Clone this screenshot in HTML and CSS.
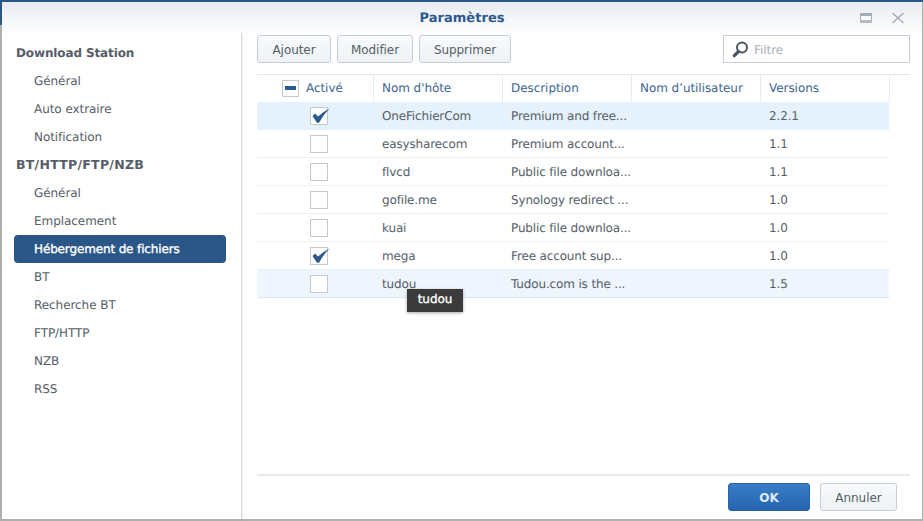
FILE: index.html
```html
<!DOCTYPE html>
<html lang="fr">
<head>
<meta charset="utf-8">
<title>Paramètres</title>
<link rel="stylesheet" href="styles.css">
</head>
<body>
<div class="window">
  <header class="titlebar">
    <div class="title">Paramètres</div>
    <div class="winbtns">
      <svg class="winicon" width="12" height="10" viewBox="0 0 12 10"><rect x="0.5" y="0.5" width="11" height="9" fill="#e4e7ea" stroke="#a3abb4"/><rect x="0" y="0" width="12" height="3" fill="#a3abb4"/><rect x="1" y="3" width="10" height="4" fill="#fbfcfd"/><rect x="0" y="7" width="12" height="3" fill="#b4bac1"/></svg>
      <svg class="winicon" width="12" height="10" viewBox="0 0 12 10"><path d="M0.5 0 L11.5 10 M11.5 0 L0.5 10" stroke="#a3abb4" stroke-width="1.4" fill="none"/></svg>
    </div>
  </header>
  <div class="body">
    <nav class="sidebar">
      <div class="nav-head">Download Station</div>
      <div class="nav-item">Général</div>
      <div class="nav-item">Auto extraire</div>
      <div class="nav-item">Notification</div>
      <div class="nav-head wide">BT/HTTP/FTP/NZB</div>
      <div class="nav-item">Général</div>
      <div class="nav-item">Emplacement</div>
      <div class="nav-item selected">Hébergement de fichiers</div>
      <div class="nav-item">BT</div>
      <div class="nav-item">Recherche BT</div>
      <div class="nav-item">FTP/HTTP</div>
      <div class="nav-item">NZB</div>
      <div class="nav-item">RSS</div>
    </nav>
    <main class="content">
      <div class="toolbar">
        <button class="btn b-add">Ajouter</button>
        <button class="btn b-mod">Modifier</button>
        <button class="btn b-del">Supprimer</button>
        <div class="filter">
          <svg width="17" height="17" viewBox="0 0 17 17"><circle cx="10" cy="6.5" r="5" fill="none" stroke="#4d5560" stroke-width="2"/><path d="M6.5 10.5 L2.3 14.7" stroke="#4d5560" stroke-width="3.2" stroke-linecap="round"/></svg>
          <span class="filter-text">Filtre</span>
        </div>
      </div>
      <div class="grid-head">
        <div class="hc c-check"><span class="box small"><i class="dash"></i></span><span>Activé</span></div>
        <div class="hc c-host">Nom d'hôte</div>
        <div class="hc c-desc">Description</div>
        <div class="hc c-user">Nom d’utilisateur</div>
        <div class="hc c-ver">Versions</div>
        <div class="hc c-end"></div>
      </div>
      <div class="grid-body">
        <div class="row hl">
          <div class="c c-check"><span class="box"><svg class="tick" width="18" height="16" viewBox="0 0 18 16"><path d="M0.5 8 L3 5.5 L6 8.6 Q 11 3.8 17.5 0.5 Q 11.5 6.5 7 14.8 L5 14.8 Z" fill="#2d5a8e"/></svg></span></div>
          <div class="c c-host">OneFichierCom</div><div class="c c-desc">Premium and free...</div><div class="c c-user"></div><div class="c c-ver">2.2.1</div>
        </div>
        <div class="row">
          <div class="c c-check"><span class="box"></span></div>
          <div class="c c-host">easysharecom</div><div class="c c-desc">Premium account...</div><div class="c c-user"></div><div class="c c-ver">1.1</div>
        </div>
        <div class="row">
          <div class="c c-check"><span class="box"></span></div>
          <div class="c c-host">flvcd</div><div class="c c-desc">Public file downloa...</div><div class="c c-user"></div><div class="c c-ver">1.1</div>
        </div>
        <div class="row">
          <div class="c c-check"><span class="box"></span></div>
          <div class="c c-host">gofile.me</div><div class="c c-desc">Synology redirect ...</div><div class="c c-user"></div><div class="c c-ver">1.0</div>
        </div>
        <div class="row">
          <div class="c c-check"><span class="box"></span></div>
          <div class="c c-host">kuai</div><div class="c c-desc">Public file downloa...</div><div class="c c-user"></div><div class="c c-ver">1.0</div>
        </div>
        <div class="row">
          <div class="c c-check"><span class="box"><svg class="tick" width="18" height="16" viewBox="0 0 18 16"><path d="M0.5 8 L3 5.5 L6 8.6 Q 11 3.8 17.5 0.5 Q 11.5 6.5 7 14.8 L5 14.8 Z" fill="#2d5a8e"/></svg></span></div>
          <div class="c c-host">mega</div><div class="c c-desc">Free account sup...</div><div class="c c-user"></div><div class="c c-ver">1.0</div>
        </div>
        <div class="row hover">
          <div class="c c-check"><span class="box"></span></div>
          <div class="c c-host">tudou</div><div class="c c-desc">Tudou.com is the ...</div><div class="c c-user"></div><div class="c c-ver">1.5</div>
        </div>
        <div class="tooltip">tudou</div>
      </div>
      <footer class="footer">
        <button class="btn primary">OK</button>
        <button class="btn cancel">Annuler</button>
      </footer>
    </main>
  </div>
</div>
</body>
</html>
```
FILE: styles.css
```css
* { box-sizing: border-box; }
html, body { margin: 0; height: 100%; overflow: hidden; }
body {
  background: #b0b0b0;
  font-family: "DejaVu Sans", sans-serif;
  font-size: 12px;
  letter-spacing: -0.06px;
  text-rendering: geometricPrecision;
  color: #555e68;
  padding: 2px 1px 2px 2px;
  position: relative;
}
body::before {
  content: "";
  position: absolute;
  left: 0; right: 0; top: 0;
  height: 2px;
  background: #2a5788;
}
body::after {
  content: "";
  position: absolute;
  left: 0; top: 0;
  width: 2px;
  height: 25px;
  background: #2a5788;
}
.window {
  height: 100%;
  background: #fff;
  display: flex;
  flex-direction: column;
}
.titlebar {
  height: 31px;
  flex: none;
  padding-top: 1px;
  background: linear-gradient(#e7ecf2, #fdfdfe);
  display: flex;
  align-items: center;
  justify-content: center;
  position: relative;
}
.title {
  font-weight: bold;
  font-size: 13px;
  letter-spacing: 0.05px;
  color: #2d5a8e;
}
.winbtns {
  position: absolute;
  right: 18px;
  top: 11px;
  display: flex;
  gap: 20px;
}
.winicon { display: block; }
.body { flex: 1; display: flex; min-height: 0; }
.sidebar {
  width: 240px;
  flex: none;
  border-right: 1px solid #d4d8dc;
  box-shadow: 1px 0 2px rgba(0,0,0,.06);
  padding: 6px 15px 0 12px;
}
.nav-head, .nav-item {
  height: 28px;
  line-height: 28px;
  white-space: nowrap;
}
.nav-head {
  font-weight: bold;
  font-size: 12px;
  letter-spacing: -0.12px;
  padding-left: 2px;
  color: #555e68;
}
.nav-head.wide { font-size: 12.5px; letter-spacing: 0.27px; }
.nav-item { padding-left: 20px; }
.nav-item.selected {
  background: #2a5788;
  color: #fff;
  -webkit-text-stroke: 0.35px #fff;
  letter-spacing: -0.14px;
  border-radius: 4px;
}
.content {
  flex: 1;
  min-width: 0;
  padding: 2px 12px 8px 15px;
  display: flex;
  flex-direction: column;
}
.toolbar {
  height: 28px;
  flex: none;
  display: flex;
  gap: 6px;
}
.btn {
  font: inherit;
  letter-spacing: inherit;
  color: #555e68;
  height: 28px;
  padding: 1px 0 0;
  border: 1px solid #c5ced8;
  border-radius: 3px;
  background: linear-gradient(#f8fafc, #eef2f6);
}
.b-add { width: 74px; }
.b-mod { width: 76px; }
.b-del { width: 92px; }
.filter {
  margin-left: auto;
  width: 187px;
  height: 28px;
  border: 1px solid #c5ced8;
  display: flex;
  align-items: center;
  padding: 0 0 0 8px;
  gap: 5px;
  color: #a8b0b8;
}
.filter svg { flex: none; }
.filter-text { padding-top: 1px; }
.grid-head {
  flex: none;
  margin-top: 11px;
  height: 28px;
  border-top: 1px solid #e3e7eb;
  display: flex;
  color: #40668f;
}
.hc {
  display: flex;
  align-items: center;
  padding: 0 0 2px 8px;
  border-right: 1px solid #e8ecef;
}
.hc.c-check { padding-left: 25px; gap: 7px; }
.hc.c-end { width: 11px; border-right: 0; padding: 0; }
.c-check { width: 117px; flex: none; }
.c-host, .c-desc, .c-user, .c-ver { width: 129px; flex: none; }
.grid-body { flex: 1; position: relative; min-height: 0; }
.row {
  height: 28px;
  width: 632px;
  display: flex;
  letter-spacing: -0.15px;
  border-bottom: 1px solid #eef1f4;
}
.row.hl { background: #e6f2fb; border-bottom-color: #e6f2fb; }
.row.hover { background: #eef5fc; border-bottom-color: #dfe8f0; }
.c {
  display: flex;
  align-items: center;
  padding-left: 8px;
  white-space: nowrap;
}
.c.c-check { padding: 1px 0 0 53px; }
.box {
  width: 18px;
  height: 18px;
  flex: none;
  border: 1px solid #c2c9d0;
  background: #fff;
  position: relative;
  display: block;
}
.box.small { width: 17px; height: 17px; margin-top: 2px; }
.dash {
  position: absolute;
  left: 2px; top: 5px;
  width: 11px; height: 4px;
  background: #2d5a8e;
}
.tick { position: absolute; left: 1px; top: 0; }
.tooltip {
  position: absolute;
  left: 150px;
  top: 187px;
  width: 56px;
  height: 23px;
  background: #3b3b3b;
  color: #fff;
  -webkit-text-stroke: 0.35px #fff;
  line-height: 20px;
  text-align: center;
  box-shadow: 0 1px 3px rgba(0,0,0,.35);
}
.footer {
  flex: none;
  height: 37px;
  border-top: 2px solid #e8ebee;
  display: flex;
  justify-content: flex-end;
  align-items: flex-end;
  gap: 10px;
  padding-right: 13px;
}
.primary {
  width: 82px;
  color: #dfeaf6;
  font-weight: bold;
  border-color: #2a62a8;
  background: linear-gradient(#3a7cc6, #2464b0);
}
.cancel { width: 77px; }
```
